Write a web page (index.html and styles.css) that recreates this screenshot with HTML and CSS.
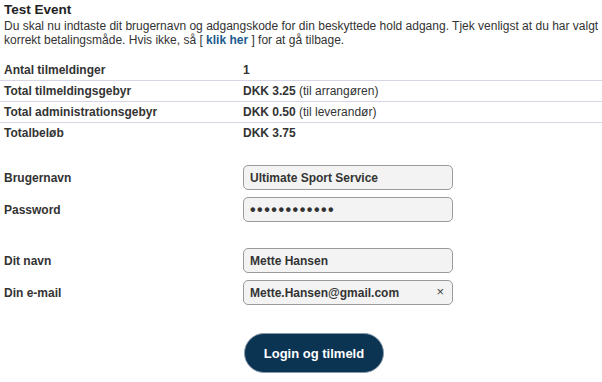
FILE: index.html
```html
<!doctype html>
<html lang="da">
<head>
  <title>Test Event</title>
  <meta charset="UTF-8">
  <meta name="viewport" content="width=device-width, initial-scale=1">
  <link rel="stylesheet" href="styles.css">
</head>
<body>
  <div class="signup">
    <h1>Test Event</h1>
    <p class="intro">Du skal nu indtaste dit brugernavn og adgangskode for din beskyttede hold adgang. Tjek venligst at du har valgt korrekt betalingsmåde. Hvis ikke, så [ <a href="#" class="back-link">klik her</a> ] for at gå tilbage.</p>

    <table class="summary">
      <tr>
        <td class="label">Antal tilmeldinger</td>
        <td><b>1</b></td>
      </tr>
      <tr>
        <td class="label">Total tilmeldingsgebyr</td>
        <td><b>DKK 3.25</b> (til arrangøren)</td>
      </tr>
      <tr>
        <td class="label">Total administrationsgebyr</td>
        <td><b>DKK 0.50</b> (til leverandør)</td>
      </tr>
      <tr>
        <td class="label">Totalbeløb</td>
        <td><b>DKK 3.75</b></td>
      </tr>
    </table>

    <form class="login-form">
      <div class="field-group">
        <div class="field">
          <label for="username">Brugernavn</label>
          <input type="text" id="username" value="Ultimate Sport Service">
        </div>
        <div class="field">
          <label for="password">Password</label>
          <input type="password" id="password" value="hemmeligkode">
        </div>
      </div>
      <div class="field-group">
        <div class="field">
          <label for="name">Dit navn</label>
          <input type="text" id="name" value="Mette Hansen">
        </div>
        <div class="field">
          <label for="email">Din e-mail</label>
          <div class="input-wrap">
            <input type="text" id="email" value="Mette.Hansen@gmail.com">
            <span class="clear-btn">&times;</span>
          </div>
        </div>
      </div>
      <div class="actions">
        <button type="button" class="submit-btn">Login og tilmeld</button>
      </div>
    </form>
  </div>
</body>
</html>
```
FILE: styles.css
```css
body {
  font-family: 'Liberation Sans', Arial, sans-serif;
  color: #222;
  background: #fff;
  margin: 0;
}
.signup {
  padding-top: 2px;
}
h1 {
  font-size: 13.5px;
  font-weight: 700;
  line-height: 16px;
  margin: 0 0 1px 0;
  padding-left: 4px;
  color: #222;
}
.intro {
  font-size: 12px;
  line-height: 14px;
  margin: 0;
  padding-left: 4px;
  color: #333;
}
.back-link {
  color: #1d5a8e;
  font-weight: 700;
  text-decoration: none;
}
.summary {
  width: 100%;
  border-collapse: collapse;
  margin-top: 13px;
  font-size: 12px;
  color: #333;
}
.summary td {
  padding: 0 4px;
  height: 20px;
  border-bottom: 1px solid #d8d6e6;
}
.summary tr:last-child td {
  border-bottom: none;
}
.summary .label {
  width: 231px;
  font-weight: 700;
}
.login-form {
  margin-top: 22px;
}
.field-group {
  display: flex;
  flex-direction: column;
  gap: 7px;
  margin-bottom: 26px;
}
.field {
  display: flex;
  align-items: center;
}
.field label {
  width: 239px;
  padding-left: 4px;
  font-size: 12px;
  font-weight: 700;
  color: #333;
}
.field input {
  width: 210px;
  height: 25px;
  box-sizing: border-box;
  border: 1px solid #9a9a9a;
  border-radius: 5px;
  background: #f3f3f3;
  padding: 0 24px 0 6px;
  font-family: 'Liberation Sans', Arial, sans-serif;
  font-size: 12px;
  font-weight: 700;
  color: #333;
}
#password {
  font-size: 16px;
  letter-spacing: 1.5px;
}
.input-wrap {
  position: relative;
}
.clear-btn {
  position: absolute;
  right: 9px;
  top: 5px;
  font-size: 13px;
  color: #444;
  line-height: 14px;
}
.actions {
  padding: 2px 0 0 244px;
}
.submit-btn {
  width: 140px;
  height: 40px;
  border-radius: 20px;
  border: 1px solid #8798aa;
  background: #0b3352;
  color: #fff;
  font-family: 'Liberation Sans', Arial, sans-serif;
  font-size: 13px;
  font-weight: 700;
  cursor: pointer;
}
```
